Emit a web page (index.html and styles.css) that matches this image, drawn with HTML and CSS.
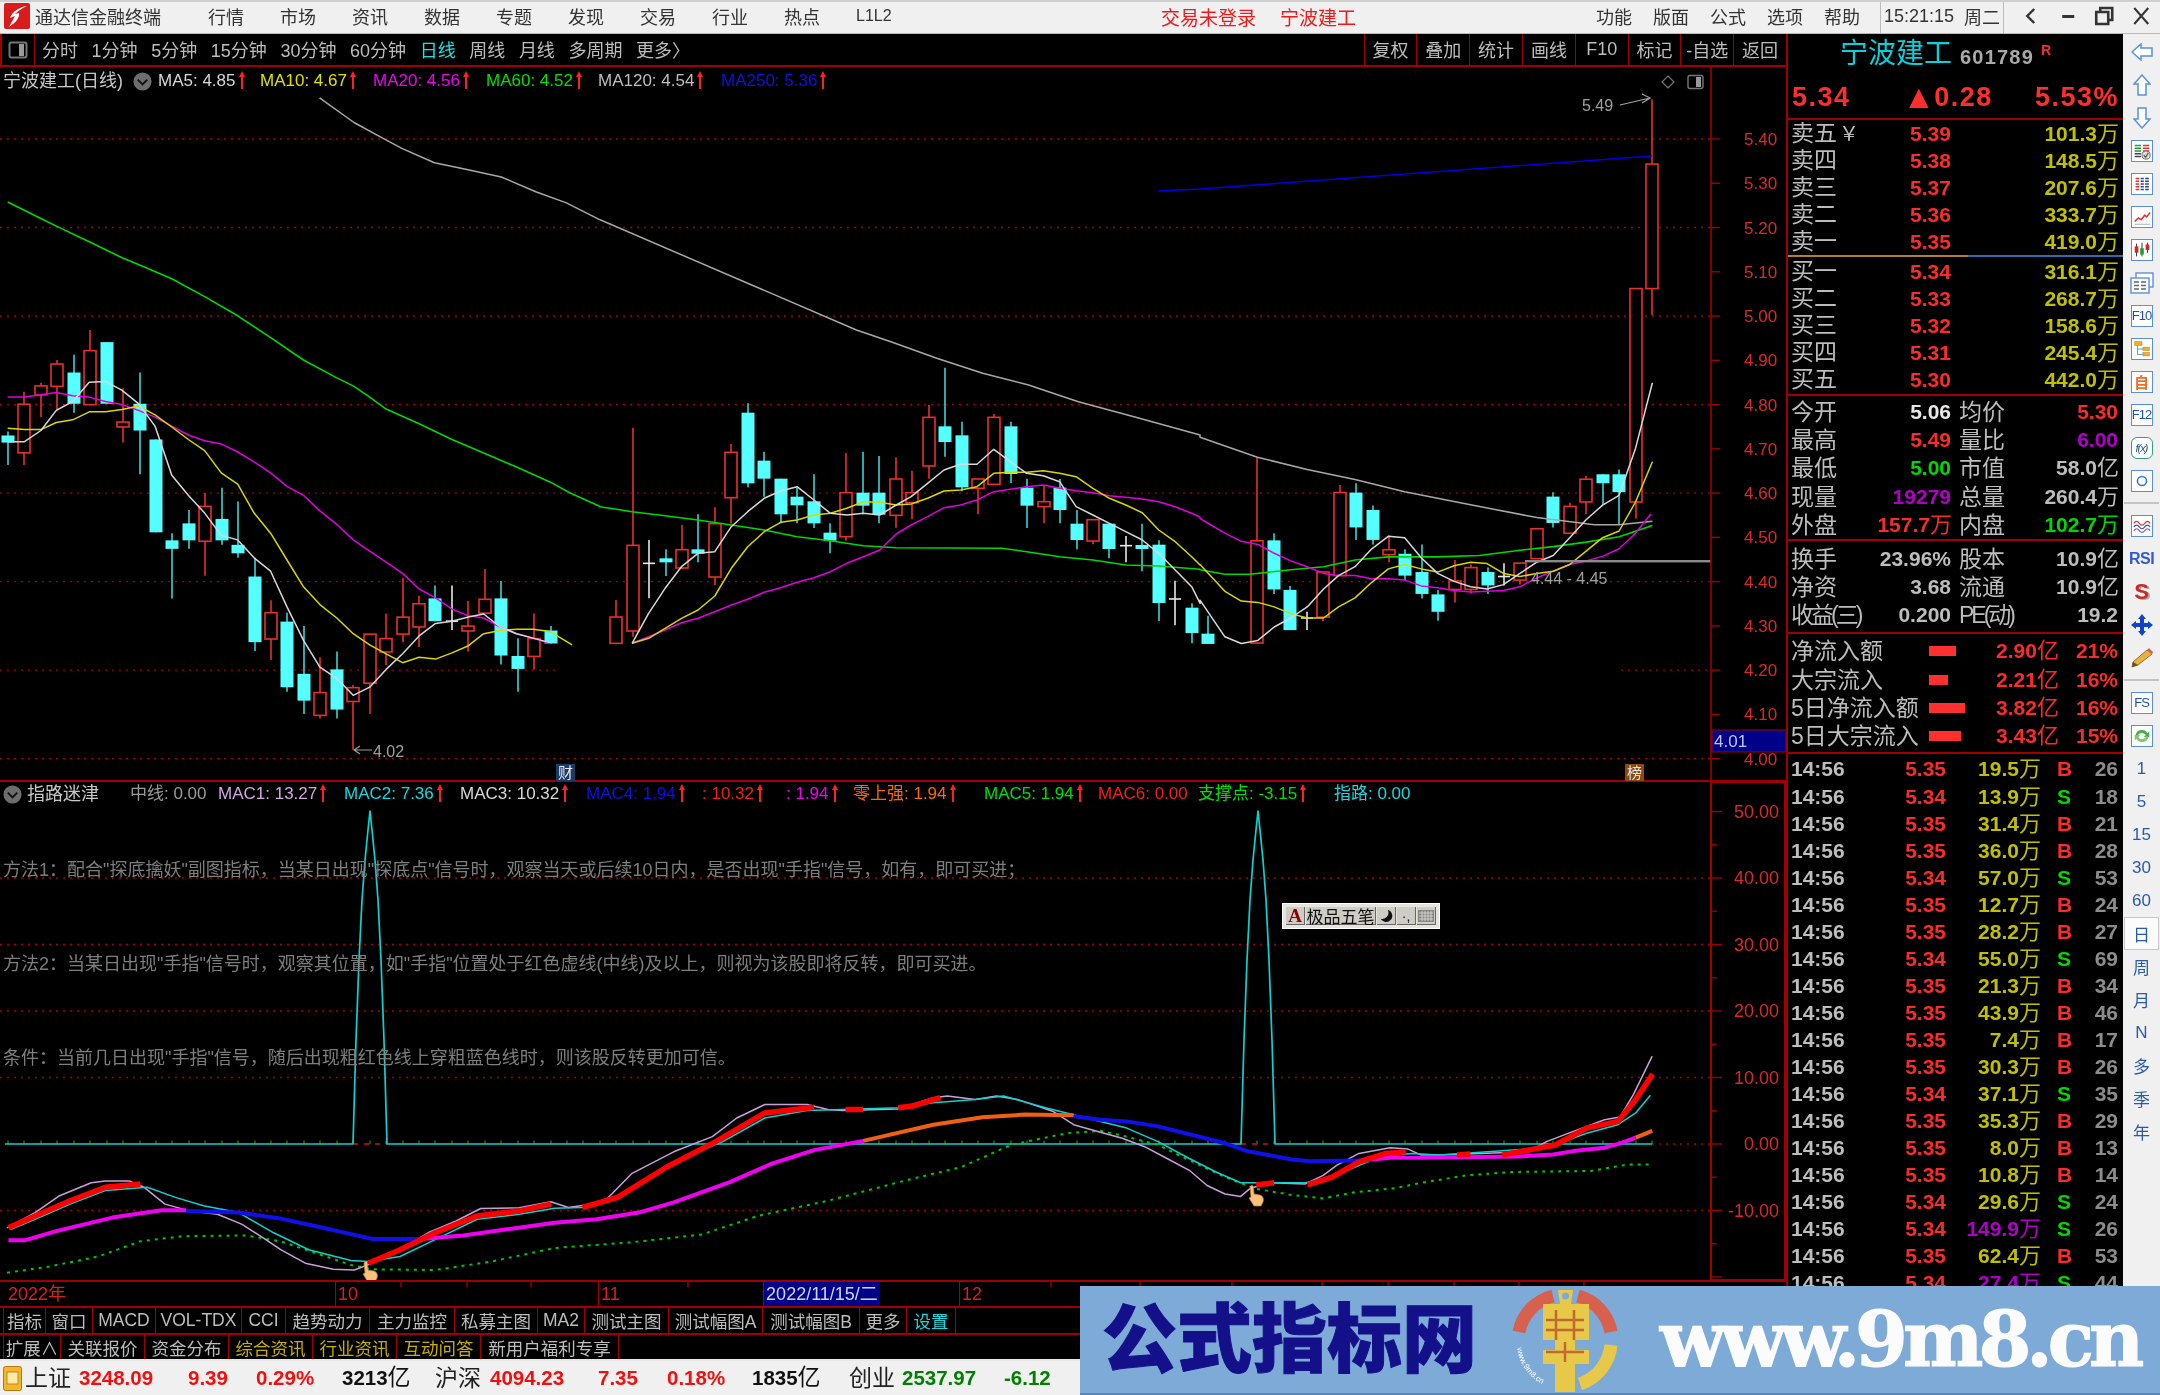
FILE: index.html
```html
<!DOCTYPE html>
<html lang="zh-CN">
<head>
<meta charset="utf-8">
<title>通达信金融终端</title>
<link rel="stylesheet" href="styles.css">
</head>
<body>
<div class="app">
  <header class="titlebar">
    <svg class="logo" viewBox="0 0 26 26"><rect width="26" height="26" rx="2" fill="#d81c1c"/><path d="M23 3 C15 4 8 9 6 15 L11 13 L5 24 C11 20 16 15 15 10 L11 11 C14 8 18 5 23 3Z" fill="#fff"/></svg>
    <span class="app-name">通达信金融终端</span>
    <nav class="menu menu-main"><span>行情</span><span>市场</span><span>资讯</span><span>数据</span><span>专题</span><span>发现</span><span>交易</span><span>行业</span><span>热点</span><span class="l1l2">L1L2</span></nav>
    <span class="login">交易未登录</span>
    <span class="login login-stock">宁波建工</span>
    <nav class="menu menu-side"><span>功能</span><span>版面</span><span>公式</span><span>选项</span><span>帮助</span></nav>
    <div class="clock"><span>15:21:15</span><span class="week">周二</span></div>
    <div class="win">
      <svg viewBox="0 0 36 24"><path d="M21 5 L14 12 L21 19" fill="none" stroke="#333" stroke-width="2.4"/></svg>
      <svg viewBox="0 0 36 24"><path d="M12 12.5 H24" stroke="#333" stroke-width="3"/></svg>
      <svg viewBox="0 0 36 24"><path d="M14 8 V4 H26 V16 H22 M10 8 H22 V20 H10Z" fill="none" stroke="#333" stroke-width="2.6"/></svg>
      <svg viewBox="0 0 36 24"><path d="M11 4 L25 20 M25 4 L11 20" stroke="#333" stroke-width="2"/></svg>
    </div>
  </header>

  <div class="workspace">
    <main class="charts">
      <div class="period-bar">
        <div class="period-toggle"><svg viewBox="0 0 20 18"><rect x="1.5" y="1.5" width="17" height="15" rx="2" fill="none" stroke="#777" stroke-width="2"/><rect x="11" y="3" width="5" height="12" fill="#999"/></svg></div>
        <div class="periods"><span>分时</span><span>1分钟</span><span>5分钟</span><span>15分钟</span><span>30分钟</span><span>60分钟</span><span class="on">日线</span><span>周线</span><span>月线</span><span>多周期</span><span>更多〉</span></div>
        <div class="actions"><span>复权</span><span>叠加</span><span>统计</span><span>画线</span><span>F10</span><span>标记</span><span>-自选</span><span>返回</span></div>
      </div>

      <section class="pane price-pane">
        <svg id="price" class="plot" viewBox="0 67 1786 714" width="1786" height="714"></svg>
        <div class="legend price-legend">
          <span class="pane-name">宁波建工(日线)</span>
          <svg class="chev" viewBox="0 0 20 20"><circle cx="10" cy="10" r="9.5" fill="#6e6e6e"/><path d="M5 8 L10 13 L15 8" fill="none" stroke="#111" stroke-width="2"/></svg>
          <span class="c-white">MA5: 4.85<i class="up"></i></span>
          <span class="c-yellow">MA10: 4.67<i class="up"></i></span>
          <span class="c-magenta">MA20: 4.56<i class="up"></i></span>
          <span class="c-green">MA60: 4.52<i class="up"></i></span>
          <span class="c-gray">MA120: 4.54<i class="up"></i></span>
          <span class="c-blue">MA250: 5.36<i class="up"></i></span>
        </div>
        <span class="badge badge-cai">财</span>
        <span class="badge badge-bang">榜</span>
      </section>

      <section class="pane sub-pane">
        <svg id="sub" class="plot" viewBox="0 782 1786 498" width="1786" height="498"></svg>
        <div class="legend sub-legend">
          <svg class="chev" viewBox="0 0 20 20"><circle cx="10" cy="10" r="9.5" fill="#6e6e6e"/><path d="M5 8 L10 13 L15 8" fill="none" stroke="#111" stroke-width="2"/></svg>
          <span class="pane-name">指路迷津</span>
          <span class="c-mid">中线: 0.00</span>
          <span class="c-lilac">MAC1: 13.27<i class="up"></i></span>
          <span class="c-cyan">MAC2: 7.36<i class="up"></i></span>
          <span class="c-white">MAC3: 10.32<i class="up"></i></span>
          <span class="c-blue">MAC4: 1.94<i class="up"></i></span>
          <span class="c-red">: 10.32<i class="up"></i></span>
          <span class="c-magenta">: 1.94<i class="up"></i></span>
          <span class="c-orange">零上强: 1.94<i class="up"></i></span>
          <span class="c-green">MAC5: 1.94<i class="up"></i></span>
          <span class="c-red">MAC6: 0.00</span>
          <span class="c-green">支撑点: -3.15<i class="up"></i></span>
          <span class="c-cyan">指路: 0.00</span>
        </div>
        <p class="note note-1">方法1：配合"探底擒妖"副图指标，当某日出现"探底点"信号时，观察当天或后续10日内，是否出现"手指"信号，如有，即可买进；</p>
        <p class="note note-2">方法2：当某日出现"手指"信号时，观察其位置，如"手指"位置处于红色虚线(中线)及以上，则视为该股即将反转，即可买进。</p>
        <p class="note note-3">条件：当前几日出现"手指"信号，随后出现粗红色线上穿粗蓝色线时，则该股反转更加可信。</p>
        <div class="ime">
          <span class="ime-a">A</span><span class="ime-name">极品五笔</span>
          <span class="ime-btn"><svg viewBox="0 0 16 16" width="14" height="14"><path d="M10 1 A7 7 0 1 1 2 11 A7 7 0 0 0 10 1Z" fill="#111"/></svg></span>
          <span class="ime-btn ime-punct">·,</span>
          <span class="ime-btn"><svg viewBox="0 0 16 12" width="16" height="12"><rect width="16" height="12" fill="#888"/><path d="M1 3H15M1 6H15M1 9H15M4 1V11M7 1V11M10 1V11M13 1V11" stroke="#ddd" stroke-width=".8"/></svg></span>
        </div>
      </section>

      <div class="date-row">
        <span class="date">2022年</span><span class="date">10</span><span class="date">11</span><span class="date date-on">2022/11/15/二</span><span class="date">12</span>
        <svg class="date-ticks" viewBox="0 0 1786 6" width="1786" height="6"><path d="M401 0v5M467 0v5M531 0v5M688 0v5M1051 0v5M1140 0v5M1232 0v5M1322 0v5M1388 0v5M1454 0v5M1519 0v5M1584 0v5" stroke="#a00000" stroke-width="1.4"/></svg>
      </div>
      <div class="tabs tabs-a"><span>指标</span><span>窗口</span><span>MACD</span><span>VOL-TDX</span><span>CCI</span><span>趋势动力</span><span>主力监控</span><span>私募主图</span><span>MA2</span><span>测试主图</span><span>测试幅图A</span><span>测试幅图B</span><span>更多</span><span class="c-cyan">设置</span></div>
      <div class="tabs tabs-b"><span>扩展∧</span><span>关联报价</span><span>资金分布</span><span class="c-gold">综合资讯</span><span class="c-gold">行业资讯</span><span class="c-gold">互动问答</span><span>新用户福利专享</span></div>
    </main>

    <aside class="quote">
      <div class="stock-head">
        <div class="stock-name"><span class="name">宁波建工</span><span class="code">601789</span><sup class="flag">R</sup></div>
        <div class="stock-price"><b>5.34</b><b class="tri-cell"><i class="tri">▲</i>0.28</b><b>5.53%</b></div>
      </div>
      <div class="book book-sell">
        <div class="book-row"><span>卖五<i class="yen">￥</i></span><b class="red">5.39</b><b class="yel">101.3<i class="u">万</i></b></div>
        <div class="book-row"><span>卖四</span><b class="red">5.38</b><b class="yel">148.5<i class="u">万</i></b></div>
        <div class="book-row"><span>卖三</span><b class="red">5.37</b><b class="yel">207.6<i class="u">万</i></b></div>
        <div class="book-row"><span>卖二</span><b class="red">5.36</b><b class="yel">333.7<i class="u">万</i></b></div>
        <div class="book-row"><span>卖一</span><b class="red">5.35</b><b class="yel">419.0<i class="u">万</i></b></div>
      </div>
      <div class="book-split"></div>
      <div class="book book-buy">
        <div class="book-row"><span>买一</span><b class="red">5.34</b><b class="yel">316.1<i class="u">万</i></b></div>
        <div class="book-row"><span>买二</span><b class="red">5.33</b><b class="yel">268.7<i class="u">万</i></b></div>
        <div class="book-row"><span>买三</span><b class="red">5.32</b><b class="yel">158.6<i class="u">万</i></b></div>
        <div class="book-row"><span>买四</span><b class="red">5.31</b><b class="yel">245.4<i class="u">万</i></b></div>
        <div class="book-row"><span>买五</span><b class="red">5.30</b><b class="yel">442.0<i class="u">万</i></b></div>
      </div>
      <div class="stats stats-a">
        <div class="stat"><span>今开</span><b class="wht">5.06</b><span>均价</span><b class="red">5.30</b></div>
        <div class="stat"><span>最高</span><b class="red">5.49</b><span>量比</span><b class="pur">6.00</b></div>
        <div class="stat"><span>最低</span><b class="grn">5.00</b><span>市值</span><b>58.0<i class="u">亿</i></b></div>
        <div class="stat"><span>现量</span><b class="pur">19279</b><span>总量</span><b>260.4<i class="u">万</i></b></div>
        <div class="stat"><span>外盘</span><b class="red">157.7<i class="u">万</i></b><span>内盘</span><b class="grn">102.7<i class="u">万</i></b></div>
      </div>
      <div class="stats stats-b">
        <div class="stat"><span>换手</span><b>23.96%</b><span>股本</span><b>10.9<i class="u">亿</i></b></div>
        <div class="stat"><span>净资</span><b>3.68</b><span>流通</span><b>10.9<i class="u">亿</i></b></div>
        <div class="stat"><span class="tight">收益(三)</span><b>0.200</b><span class="tight">PE(动)</span><b>19.2</b></div>
      </div>
      <div class="flows">
        <div class="flow"><span>净流入额</span><i class="bar" style="width:27px"></i><b>2.90<i class="u">亿</i></b><b>21%</b></div>
        <div class="flow"><span>大宗流入</span><i class="bar" style="width:19px"></i><b>2.21<i class="u">亿</i></b><b>16%</b></div>
        <div class="flow"><span>5日净流入额</span><i class="bar" style="width:36px"></i><b>3.82<i class="u">亿</i></b><b>16%</b></div>
        <div class="flow"><span>5日大宗流入</span><i class="bar" style="width:32px"></i><b>3.43<i class="u">亿</i></b><b>15%</b></div>
      </div>
      <div class="ticks">
        <div class="tick"><b>14:56</b><b class="red">5.35</b><b class="yel">19.5<i class="u">万</i></b><b class="red bs">B</b><b class="cnt">26</b></div>
        <div class="tick"><b>14:56</b><b class="red">5.34</b><b class="yel">13.9<i class="u">万</i></b><b class="grn bs">S</b><b class="cnt">18</b></div>
        <div class="tick"><b>14:56</b><b class="red">5.35</b><b class="yel">31.4<i class="u">万</i></b><b class="red bs">B</b><b class="cnt">21</b></div>
        <div class="tick"><b>14:56</b><b class="red">5.35</b><b class="yel">36.0<i class="u">万</i></b><b class="red bs">B</b><b class="cnt">28</b></div>
        <div class="tick"><b>14:56</b><b class="red">5.34</b><b class="yel">57.0<i class="u">万</i></b><b class="grn bs">S</b><b class="cnt">53</b></div>
        <div class="tick"><b>14:56</b><b class="red">5.35</b><b class="yel">12.7<i class="u">万</i></b><b class="red bs">B</b><b class="cnt">24</b></div>
        <div class="tick"><b>14:56</b><b class="red">5.35</b><b class="yel">28.2<i class="u">万</i></b><b class="red bs">B</b><b class="cnt">27</b></div>
        <div class="tick"><b>14:56</b><b class="red">5.34</b><b class="yel">55.0<i class="u">万</i></b><b class="grn bs">S</b><b class="cnt">69</b></div>
        <div class="tick"><b>14:56</b><b class="red">5.35</b><b class="yel">21.3<i class="u">万</i></b><b class="red bs">B</b><b class="cnt">34</b></div>
        <div class="tick"><b>14:56</b><b class="red">5.35</b><b class="yel">43.9<i class="u">万</i></b><b class="red bs">B</b><b class="cnt">46</b></div>
        <div class="tick"><b>14:56</b><b class="red">5.35</b><b class="yel">7.4<i class="u">万</i></b><b class="red bs">B</b><b class="cnt">17</b></div>
        <div class="tick"><b>14:56</b><b class="red">5.35</b><b class="yel">30.3<i class="u">万</i></b><b class="red bs">B</b><b class="cnt">26</b></div>
        <div class="tick"><b>14:56</b><b class="red">5.34</b><b class="yel">37.1<i class="u">万</i></b><b class="grn bs">S</b><b class="cnt">35</b></div>
        <div class="tick"><b>14:56</b><b class="red">5.35</b><b class="yel">35.3<i class="u">万</i></b><b class="red bs">B</b><b class="cnt">29</b></div>
        <div class="tick"><b>14:56</b><b class="red">5.35</b><b class="yel">8.0<i class="u">万</i></b><b class="red bs">B</b><b class="cnt">13</b></div>
        <div class="tick"><b>14:56</b><b class="red">5.35</b><b class="yel">10.8<i class="u">万</i></b><b class="red bs">B</b><b class="cnt">14</b></div>
        <div class="tick"><b>14:56</b><b class="red">5.34</b><b class="yel">29.6<i class="u">万</i></b><b class="grn bs">S</b><b class="cnt">24</b></div>
        <div class="tick"><b>14:56</b><b class="red">5.34</b><b class="pur">149.9<i class="u">万</i></b><b class="grn bs">S</b><b class="cnt">26</b></div>
        <div class="tick"><b>14:56</b><b class="red">5.35</b><b class="yel">62.4<i class="u">万</i></b><b class="red bs">B</b><b class="cnt">53</b></div>
        <div class="tick"><b>14:56</b><b class="red">5.34</b><b class="pur">27.4<i class="u">万</i></b><b class="grn bs">S</b><b class="cnt">44</b></div>
      </div>
    </aside>

    <nav class="tools">
      <div class="tool"><svg viewBox="0 0 22 18" width="22" height="18"><path d="M1 9 L10 1 V5 H21 V13 H10 V17Z" fill="#fff" stroke="#5a8fe0" stroke-width="1.5"/></svg></div>
      <div class="tool"><svg viewBox="0 0 18 22" width="18" height="22"><path d="M9 1 L17 10 H13 V21 H5 V10 H1Z" fill="#fff" stroke="#5a8fe0" stroke-width="1.5"/></svg></div>
      <div class="tool"><svg viewBox="0 0 18 22" width="18" height="22"><path d="M9 21 L17 12 H13 V1 H5 V12 H1Z" fill="#fff" stroke="#5a8fe0" stroke-width="1.5"/></svg></div>
      <div class="tool"><svg class="frame" viewBox="0 0 22 22"><path d="M3 5H10M3 8H10M3 11H10" stroke="#1a9c3a" stroke-width="1.5"/><path d="M12 5H19M12 8H19M12 11H19" stroke="#e03030" stroke-width="1.5"/><path d="M3 14H10M3 17H10" stroke="#444" stroke-width="1.5"/><circle cx="15.5" cy="15.5" r="4.5" fill="#ddd" stroke="#666"/><path d="M13 15.5 L15 18 L18 13" fill="none" stroke="#444" stroke-width="1.2"/></svg></div>
      <div class="tool"><svg class="frame" viewBox="0 0 22 22"><path d="M4 5H8M4 8H8M4 11H8M4 14H8M4 17H8" stroke="#e03030" stroke-width="1.6"/><path d="M9.5 5H13M9.5 8H13M9.5 11H13M9.5 14H13M9.5 17H13" stroke="#2040c0" stroke-width="1.6"/><path d="M14.5 5H18.5M14.5 8H18.5M14.5 11H18.5M14.5 14H18.5M14.5 17H18.5" stroke="#1a40a0" stroke-width="1.6"/></svg></div>
      <div class="tool"><svg class="frame" viewBox="0 0 22 22"><path d="M3 16 L7 12 L10 14 L14 9 L16 11 L20 6" fill="none" stroke="#e03030" stroke-width="1.6"/><path d="M3 19H20" stroke="#9ab"/></svg></div>
      <div class="tool"><svg class="frame" viewBox="0 0 22 22"><path d="M5 4V18M11 3V18M17 3V14" stroke="#222"/><rect x="3" y="7" width="4" height="7" fill="#e02020"/><rect x="9" y="9" width="4" height="7" fill="#18a030"/><rect x="15" y="5" width="4" height="6" fill="#e02020"/></svg></div>
      <div class="tool"><svg viewBox="0 0 24 22" width="24" height="22"><rect x="6" y="1" width="17" height="14" fill="#fff" stroke="#5a8fe0" stroke-width="1.4"/><rect x="1" y="6" width="18" height="15" fill="#fff" stroke="#5a8fe0" stroke-width="1.4"/><path d="M4 10H9M11 10H16M4 13.5H9M11 13.5H16M4 17H9M11 17H16" stroke="#666" stroke-width="1.6"/></svg></div>
      <div class="tool"><span class="key">F10</span></div>
      <div class="tool"><svg class="frame" viewBox="0 0 22 22"><rect x="3" y="3" width="8" height="4" fill="#f0b020" stroke="#c08010" stroke-width=".6"/><rect x="12" y="9" width="7" height="3.6" fill="#f0b020" stroke="#c08010" stroke-width=".6"/><rect x="12" y="15" width="7" height="3.6" fill="#f0b020" stroke="#c08010" stroke-width=".6"/><path d="M6 7V17H12M6 11H12" fill="none" stroke="#5a8fe0"/></svg></div>
      <div class="tool"><span class="key key-zi">自</span></div>
      <div class="tool"><span class="key">F12</span></div>
      <div class="tool"><span class="key key-fx">f(x)</span></div>
      <div class="tool"><svg class="frame" viewBox="0 0 22 22"><circle cx="11" cy="11" r="5" fill="none" stroke="#3a78d8" stroke-width="1.8"/></svg></div>
      <div class="tool-sep"></div>
      <div class="tool"><svg class="frame" viewBox="0 0 22 22"><path d="M2 8 Q5 4 8 8 T14 8 T20 8" fill="none" stroke="#e03030" stroke-width="1.3"/><path d="M2 12 Q5 8 8 12 T14 12 T20 12" fill="none" stroke="#3050d0" stroke-width="1.3"/><path d="M2 16 Q5 12 8 16 T14 16 T20 16" fill="none" stroke="#8060c0" stroke-width="1.3"/></svg></div>
      <div class="tool"><span class="rsi">RSI</span></div>
      <div class="tool"><span class="s-mark">S</span></div>
      <div class="tool"><svg viewBox="0 0 24 24" width="24" height="24"><path d="M12 1 L16 6 H14 V10 H18 V8 L23 12 L18 16 V14 H14 V18 H16 L12 23 L8 18 H10 V14 H6 V16 L1 12 L6 8 V10 H10 V6 H8Z" fill="#1044c8"/></svg></div>
      <div class="tool"><svg viewBox="0 0 24 22" width="24" height="22"><path d="M2 20 L3 15 L17 3 L22 7 L8 18Z" fill="#e8b040" stroke="#a07030"/><path d="M17 3 L19 1 L23 5 L22 7Z" fill="#e06060"/><path d="M2 20 L3 15 L8 18Z" fill="#553"/></svg></div>
      <div class="tool-sep"></div>
      <div class="tool"><span class="key">FS</span></div>
      <div class="tool"><svg class="frame" viewBox="0 0 22 22"><path d="M4 10 A7 7 0 0 1 17 8 L19 6 V12 H13 L15 10 A5 5 0 0 0 6 11Z" fill="#48b048"/><path d="M18 12 A7 7 0 0 1 5 14 L3 16 V10 H9 L7 12 A5 5 0 0 0 16 11Z" fill="#80c870"/></svg></div>
      <div class="tool tool-t">1</div><div class="tool tool-t">5</div><div class="tool tool-t">15</div><div class="tool tool-t">30</div><div class="tool tool-t">60</div>
      <div class="tool tool-t tool-on">日</div><div class="tool tool-t">周</div><div class="tool tool-t">月</div><div class="tool tool-t">N</div><div class="tool tool-t">多</div><div class="tool tool-t">季</div><div class="tool tool-t">年</div>
    </nav>
  </div>

  <footer class="status">
    <svg class="status-ic" viewBox="0 0 19 25"><rect x=".5" y=".5" width="18" height="24" rx="2" fill="#f2b52c" stroke="#b07a10"/><rect x="4" y="6" width="11" height="12" fill="#fde9a8" stroke="#c08a18"/></svg>
    <span class="idx">上证</span><b class="up-n">3248.09</b><b class="up-n">9.39</b><b class="up-n">0.29%</b><b>3213<i class="idx-u">亿</i></b>
    <span class="idx">沪深</span><b class="up-n">4094.23</b><b class="up-n">7.35</b><b class="up-n">0.18%</b><b>1835<i class="idx-u">亿</i></b>
    <span class="idx">创业</span><b class="dn-n">2537.97</b><b class="dn-n">-6.12</b>
  </footer>

  <aside class="watermark">
    <span class="wm-cn">公式指标网</span>
    <svg class="wm-logo" viewBox="1510 1286 112 108" width="112" height="108">
      <g fill="none" stroke-width="13">
        <path d="M1519 1332 A46 46 0 0 1 1553 1296" stroke="#d8604e"/>
        <path d="M1578 1296 A46 46 0 0 1 1611 1332" stroke="#d8604e"/>
        <path d="M1611 1345 A46 46 0 0 1 1580 1384" stroke="#e8c848"/>
      </g>
      <path d="M1558 1290 h15 l-2 14 h18 v36 h-14 v10 h14 v14 h-14 v28 h-20 v-28 h-12 v-14 h12 v-10 h-12 v-36 h17Z" fill="#e8c848"/>
      <circle cx="1565.5" cy="1296" r="3.5" fill="#7eaad8"/>
      <path d="M1546 1320 h38 M1546 1330 h38 M1556 1310 v30 M1574 1310 v30 M1546 1352 h38 M1565 1342 v20" stroke="#c06a30" stroke-width="2.5" fill="none"/>
      <path id="wmArc" d="M1517 1348 A48 48 0 0 0 1552 1388" fill="none"/>
      <text class="wm-arc"><textPath href="#wmArc">www.9m8.cn</textPath></text>
    </svg>
    <span class="wm-url">www.9m8.cn</span>
  </aside>
</div>
<script src="chart.js"></script>
</body>
</html>
```

FILE: styles.css
```css
* { box-sizing: border-box; }
html, body { margin: 0; padding: 0; background: #000; }
body { font-family: "Liberation Sans", "Noto Sans CJK SC", sans-serif; }
i { font-style: normal; }
p { margin: 0; }
.app { position: relative; width: 2160px; height: 1395px; overflow: hidden; display: flex; flex-direction: column; background: #000; filter: blur(.45px); }

.titlebar { flex: 0 0 34px; display: flex; align-items: center; padding: 0 0 3px 4px; background: #f0f0f0; border-top: 2px solid #cfcfcf; border-bottom: 1px solid #b8b8b8; color: #333; font-size: 18px; white-space: nowrap; }
.logo { width: 26px; height: 26px; }
.app-name { margin-left: 5px; width: 126px; }
.menu { display: flex; }
.menu-main { margin-left: 47px; gap: 36px; width: 684px; }
.l1l2 { font-size: 16px; align-self: center; }
.login { color: #f01818; font-size: 19px; margin-left: 269px; width: 97px; }
.login-stock { margin-left: 22px; width: 76px; }
.menu-side { margin-left: 240px; gap: 21px; }
.clock { margin: 0 0 -3px 20px; align-self: stretch; width: 124px; display: flex; align-items: center; padding: 0 0 3px 3px; border-left: 1px solid #bbb; border-right: 1px solid #bbb; }
.week { margin-left: 10px; }
.win { display: flex; margin-left: 9px; }
.win svg { width: 36.5px; height: 24px; }

.workspace { flex: 1 1 auto; display: flex; min-height: 0; }
.charts { width: 1788px; flex: none; display: flex; flex-direction: column; border-right: 2px solid #a00000; }
.period-bar { flex: 0 0 33px; display: flex; align-items: stretch; border-bottom: 2px solid #a00000; color: #bdbdbd; font-size: 18px; white-space: nowrap; }
.period-toggle { width: 35px; display: flex; align-items: center; justify-content: center; border-right: 1px solid #a00000; border-left: 2px solid #a00000; }
.period-toggle svg { width: 20px; height: 18px; }
.periods { display: flex; align-items: center; gap: 13.6px; margin-left: 7px; padding-bottom: 2px; }
.on { color: #22e0e0; }
.actions { display: flex; margin-left: auto; }
.actions span { width: 52.8px; display: flex; align-items: center; justify-content: center; padding-bottom: 1px; border-left: 1px solid #a00000; }

.pane { position: relative; border-bottom: 2px solid #a00000; }
.price-pane { flex: 0 0 715px; }
.sub-pane { flex: 0 0 500px; }
.plot { position: absolute; left: 0; top: 0; display: block; }
.legend { position: relative; display: grid; grid-template-rows: 100%; align-items: center; font-size: 17px; line-height: 20px; white-space: nowrap; }
.price-legend { height: 28px; grid-template-columns: 130px 25px 102px 113px 113px 112px 123px auto; padding-left: 3px; }
.sub-legend { height: 24px; grid-template-columns: 24px 103px 88px 126px 116px 126px 116px 84px 67px 131px 114px 100px 136px auto; padding-left: 3px; }
.pane-name { color: #c8c8c8; font-size: 18px; }
.chev { width: 19px; height: 19px; }
.up { position: relative; display: inline-block; width: 2px; height: 15px; margin-left: 5px; vertical-align: -3px; background: #ff2020; }
.up::before { content: ""; position: absolute; left: -2px; top: -3px; border: solid transparent; border-width: 0 3px 6px; border-bottom-color: #ff2020; }
.c-white { color: #d8d8d8; }
.c-yellow { color: #e0e000; }
.c-magenta { color: #f000f0; }
.c-green { color: #00e000; }
.c-gray { color: #bdbdbd; }
.c-blue { color: #1010e8; }
.c-mid { color: #9a9a9a; }
.c-lilac { color: #d0a8e0; }
.c-cyan { color: #18d8e0; }
.c-red { color: #f02020; }
.c-orange { color: #ff6a00; }
.c-gold { color: #c8b000; }
.badge { position: absolute; top: 697px; width: 19px; height: 17px; font-size: 15px; line-height: 17px; text-align: center; color: #e8e8e8; }
.badge-cai { left: 556px; background: #1b3a66; }
.badge-bang { left: 1625px; background: #8a4a10; }
.note { position: absolute; left: 3px; color: #7e7e7e; font-size: 18px; line-height: 24px; white-space: nowrap; }
.note-1 { top: 76px; }
.note-2 { top: 170px; }
.note-3 { top: 264px; }
.ime { position: absolute; left: 1282px; top: 121px; width: 158px; height: 26px; display: flex; gap: 1px; padding: 3px; background: #e6e4de; border: 1px solid #fff; color: #111; font-size: 17px; }
.ime span { display: flex; align-items: center; justify-content: center; background: #cfccc6; border-right: 1px solid #666; border-bottom: 1px solid #666; }
.ime-a { width: 19px; color: #8a0000; font: bold 19px "Liberation Serif", serif; }
.ime-name { width: 70px; }
.ime-btn { width: 19px; }
.ime-punct { font-size: 14px; }

.date-row { position: relative; flex: 0 0 24px; display: grid; grid-template-columns: 335px 263px 165px 196px 1fr; border-bottom: 2px solid #a00000; color: #d82020; font-size: 18px; white-space: nowrap; }
.date { padding-left: 2px; border-left: 1px solid #a00000; line-height: 24px; }
.date:first-child { padding-left: 8px; border-left: 0; }
.date-on { width: 117px; padding: 0; background: #000088; color: #d4d4e8; text-align: center; }
.date-ticks { position: absolute; left: 0; top: 0; }
.tabs { display: grid; padding-left: 3px; border-bottom: 2px solid #a00000; color: #bdbdbd; font-size: 17.5px; white-space: nowrap; }
.tabs span { display: flex; align-items: center; justify-content: center; border-right: 1px solid #a00000; }
.tabs span:first-child { border-left: 1px solid #a00000; }
.tabs-a { flex: 0 0 26px; grid-template-columns: 43px 47px 63px 86px 44px 84px 85px 83px 47px 84px 94px 97px 47px 49px; }
.tabs-b { flex: 0 0 27px; grid-template-columns: 58px 84px 84px 84px 84px 84px 138px; }
.tabs span.c-cyan { color: #18d8e0; }
.tabs span.c-gold { color: #c8b000; }

.quote { width: 335px; flex: none; display: flex; flex-direction: column; overflow: hidden; color: #bdbdbd; font-size: 23px; white-space: nowrap; }
.quote b { font-size: 21px; font-weight: bold; }
.u { font-weight: normal; font-size: 22px; line-height: 0; letter-spacing: -1px; }
.red { color: #f82c2c; }
.yel { color: #c0c000; }
.grn { color: #00d800; }
.pur { color: #b000c8; }
.wht { color: #e8e8e8; }
.stock-head { flex: 0 0 86px; border-bottom: 2px solid #a00000; }
.stock-name { height: 39px; display: flex; align-items: center; padding-left: 52px; }
.name { color: #08d0dc; font-size: 28px; line-height: 30px; }
.code { margin-left: 8px; margin-top: 7px; color: #aaa; font-size: 20px; font-weight: bold; letter-spacing: 1.2px; }
.flag { margin-left: 7px; margin-top: -8px; color: #ee3030; font-size: 14px; font-weight: bold; line-height: 1; }
.stock-price { display: flex; padding: 4px 5px 0 4px; }
.quote .stock-price b { font-size: 27px; letter-spacing: 1.5px; color: #ff2e2e; line-height: 40px; }
.quote .stock-price .tri-cell { margin-left: 52px; }
.quote .stock-price b:last-child { margin-left: auto; margin-right: -1px; }
.tri { font-size: 33px; letter-spacing: -1px; line-height: 0; vertical-align: -2px; }
.book { display: flex; flex-direction: column; padding-left: 3px; padding-right: 5px; }
.book-row { height: 27px; display: grid; grid-template-columns: 119px 1fr auto; grid-template-rows: 100%; align-items: center; line-height: 27px; }
.yen { margin-left: 2px; font-size: 20px; }
.book-split { flex: 0 0 2px; background: linear-gradient(to right, #b0802c 0 180px, #2f6cac 180px); }
.book-sell { flex: 0 0 135px; }
.book-buy { flex: 0 0 139px; border-bottom: 2px solid #a00000; padding-top: 1px; }
.stats { display: flex; flex-direction: column; padding: 0 5px 0 3px; border-bottom: 2px solid #a00000; }
.stat { flex: none; display: grid; grid-template-columns: 60px 100px 66px 1fr; grid-template-rows: 100%; align-items: center; line-height: 26px; }
.stat span:nth-of-type(2) { padding-left: 8px; }
.stat b { text-align: right; }
.tight { letter-spacing: -3px; }
.stats-a { flex: 0 0 145px; padding-top: 1.5px; }
.stats-a .stat { height: 28.4px; }
.stats-b { flex: 0 0 93px; padding-top: 3.5px; }
.stats-b .stat { height: 28px; }
.flows { flex: 0 0 120px; padding: 2.5px 5px 0 3px; border-bottom: 2px solid #a00000; }
.flow { height: 28.4px; display: grid; grid-template-columns: 138px 40px 89px 60px; grid-template-rows: 100%; align-items: center; line-height: 26px; }
.flow b { color: #f82c2c; text-align: right; }
.bar { display: block; height: 10px; background: #ff3030; }
.ticks { padding: 1.5px 5px 0 3px; }
.tick { height: 27.05px; display: grid; grid-template-columns: 60px 95px 94px 40px 38px; grid-template-rows: 100%; align-items: center; line-height: 26px; }
.tick b { text-align: right; }
.tick b:first-child { text-align: left; }
.tick .bs { text-align: left; padding-left: 17px; }
.tick .cnt { color: #8c8c8c; }

.tools { width: 37px; flex: none; display: flex; flex-direction: column; background: #f0f0f0; color: #2a5aa8; font-size: 17px; }
.tool { flex: 0 0 33px; display: flex; align-items: center; justify-content: center; }
.tool:first-child { margin-top: 1px; }
.frame, .key { width: 22px; height: 22px; background: #fff; border: 1.6px solid #5a8fe0; }
.key { display: flex; align-items: center; justify-content: center; color: #2050b0; font-size: 13px; letter-spacing: -1px; }
.key-zi { color: #f07028; font-size: 15px; font-weight: bold; letter-spacing: 0; }
.key-fx { border-radius: 6px; border-color: #3a9a90; color: #205a80; font-size: 11px; font-style: italic; }
.rsi { color: #3558d0; font-size: 16px; font-weight: bold; letter-spacing: -.5px; }
.s-mark { color: #d02828; font-size: 22px; font-weight: bold; text-shadow: 2px 1px 0 #aaa; }
.tool-sep { flex: 0 0 12px; margin: 0 1px; display: flex; align-items: center; }
.tool-sep::after { content: ""; width: 100%; height: 2px; background: #c4c4c4; }
.tool-on { margin: 0 1px; background: #fbfbfb; border: 1px solid #c8c8c8; }

.status { flex: 0 0 36px; display: grid; grid-template-columns: 22px 54px 109px 68px 86px 93px 55px 108px 69px 85px 97px 53px 102px 1fr; grid-template-rows: 100%; align-items: center; padding-left: 3px; background: #f0f0f0; border-top: 2px solid #e8e8e8; color: #111; font-size: 20.5px; line-height: 26px; white-space: nowrap; }
.status b { font-weight: bold; }
.status-ic { width: 19px; height: 25px; }
.idx { font-size: 23px; color: #222; }
.idx-u { font-size: 23px; font-weight: normal; line-height: 0; }
.status .up-n { color: #f01010; }
.status .dn-n { color: #008000; }

.watermark { position: absolute; left: 1080px; top: 1286px; width: 1080px; height: 109px; display: flex; align-items: center; background: #7eaad8; border-bottom: 2px solid #5c88b8; overflow: hidden; white-space: nowrap; }
.wm-cn { margin-left: 22px; width: 412px; color: #14108a; font-size: 75px; font-weight: 900; line-height: 90px; -webkit-text-stroke: 1px #14108a; }
.wm-logo { flex: none; margin-left: -4px; }
.wm-arc { fill: #fff; font-size: 8px; }
.wm-url { margin-left: 38px; color: #fbfbfb; font: bold 76px "DejaVu Serif", serif; letter-spacing: -5px; -webkit-text-stroke: 1.2px #fbfbfb; }
```

FILE: chart.js
```js
// Draws the price and indicator panes. Source points are measured in three
// horizontal sections of the chart, each with its own scale.
var NS = 'http://www.w3.org/2000/svg';
var STEP = 16.44, X0 = 8;

function add(svg, tag, attrs, text) {
  var el = document.createElementNS(NS, tag);
  for (var k in attrs) el.setAttribute(k, attrs[k]);
  if (text !== undefined) el.textContent = text;
  svg.appendChild(el);
  return el;
}
function polyline(svg, points, stroke, width, extra) {
  var attrs = { points: points.map(function (p) { return p[0].toFixed(1) + ',' + p[1].toFixed(1); }).join(' '), fill: 'none', stroke: stroke, 'stroke-width': width, 'stroke-linejoin': 'round' };
  for (var k in extra) attrs[k] = extra[k];
  add(svg, 'polyline', attrs);
}
function map(flat, fx, fy) {
  var out = [];
  for (var i = 0; i < flat.length; i += 2) out.push([fx(flat[i]), fy(flat[i + 1])]);
  return out;
}
var ax = function (x) { return x / 2.613; }, ay = function (y) { return 60 + y / 2.24; };
var bx = function (x) { return 600 + x / 2.613; }, by = function (y) { return 330 + y / 3; };
var cx = function (x) { return 1200 + x / 2.613; };
var dx = function (x) { return x / 1.425; }, ex = function (x) { return 1100 + x / 2.24; };
var sy = function (y) { return 770 + y / 2.96; };
function section3(a, b, c) { return map(a, ax, ay).concat(map(b, bx, by), map(c, cx, ay)); }

/* ---------- price pane ---------- */
var price = document.getElementById('price');
var py = function (p) { return 139 + (5.4 - p) * 442.6; };
var DOT = { 'stroke-dasharray': '2 5' };

[5.4, 5.2, 5.0, 4.8, 4.6, 4.4, 4.0].forEach(function (p) {
  polyline(price, [[0, py(p)], [1711, py(p)]], '#a80000', 1.4, DOT);
});
polyline(price, [[0, py(4.2)], [558, py(4.2)]], '#a80000', 1.4, DOT);
polyline(price, [[1621, py(4.2)], [1711, py(4.2)]], '#a80000', 1.4, DOT);

// type, body top, body bottom, high, low
var candlesA = [['c',841,857,832,907],['r',771,880,743,907],['r',730,750,723,800],['r',681,731,672,785],['c',700,770,660,790],['r',651,772,605,772],['c',632,770,632,770],['r',811,822,735,857],['c',770,830,700,928],['c',850,1058,850,1058],['c',1076,1095,1060,1206],['c',1038,1076,1008,1095],['r',1000,1078,970,1155],['c',1028,1076,958,1086],['c',1086,1105,989,1115],['c',1157,1304,1115,1324],['r',1238,1297,1210,1344],['c',1258,1405,1238,1415],['c',1375,1435,1268,1465],['r',1417,1468,1338,1475],['c',1365,1455,1325,1475],['r',1406,1437,1400,1545],['r',1286,1396,1286,1465],['r',1296,1326,1240,1355],['r',1248,1286,1160,1305],['r',1218,1270,1200,1315],['c',1206,1257,1177,1257],['w',1257,1257,1177,1277],['r',1268,1279,1212,1325],['r',1208,1239,1140,1240],['c',1206,1334,1167,1354],['c',1335,1364,1295,1415],['r',1296,1336,1240,1365],['c',1278,1307,1268,1307]];
var candlesB = [['r',861,940,810,940],['r',646,903,293,920],['w',700,700,630,805],['c',685,697,658,738],['r',659,714,585,718],['c',658,671,553,697],['r',581,741,532,765],['r',367,503,342,581],['c',248,460,220,472],['c',392,446,365,500],['c',446,553,446,580],['c',500,526,473,580],['c',514,580,433,594],['c',608,632,580,670],['r',488,620,369,632],['c',488,527,365,553],['c',488,554,378,580],['r',447,556,382,593],['r',488,518,422,568],['r',262,408,225,446],['c',289,336,113,380],['c',316,472,275,484],['r',447,475,447,553],['r',262,463,252,463],['c',289,432,275,459],['c',473,527,446,594],['r',515,530,465,580],['c',473,540,447,580],['c',581,630,540,658],['r',569,633,569,643],['c',581,657,581,685],['w',647,647,618,697],['c',645,657,581,724],['c',644,819,631,873],['w',807,807,752,886],['c',833,909,820,940]];
var candlesC1 = [['c',1285,1308,1245,1308]];
var candlesC2 = [['r',1077,1306,890,1306],['c',1076,1186,1060,1196],['c',1187,1277,1178,1277],['w',1250,1250,1236,1277],['r',1147,1248,1147,1257],['r',969,1155,952,1155],['c',969,1047,948,1075],['c',1008,1075,998,1085],['r',1097,1108,1065,1125],['c',1106,1155,1096,1166],['c',1147,1196,1085,1206],['c',1197,1236,1187,1256],['r',1167,1186,1120,1215],['r',1137,1186,1130,1195],['c',1147,1177,1137,1196],['w',1157,1157,1127,1177],['r',1127,1165,1127,1175],['r',1050,1117,1050,1117],['c',978,1037,968,1047],['r',1000,1060,992,1060],['r',939,990,932,1017],['c',928,948,928,997],['c',928,968,917,1040],['r',512,990,512,1027],['r',233,512,88,572]];

function drawCandles(list, start, fy) {
  list.forEach(function (c, n) {
    var x = Math.round(X0 + STEP * (start + n)), top = fy(c[1]), bot = fy(c[2]), hi = fy(c[3]), lo = fy(c[4]);
    var kind = c[0], color = kind === 'r' ? '#e8302c' : kind === 'c' ? '#3cd4d4' : '#e8e8e8';
    add(price, 'line', { x1: x, x2: x, y1: hi, y2: kind === 'r' ? top : lo, stroke: color, 'stroke-width': 1.6 });
    if (kind === 'r') add(price, 'line', { x1: x, x2: x, y1: bot, y2: lo, stroke: color, 'stroke-width': 1.6 });
    if (kind === 'w') add(price, 'line', { x1: x - 6, x2: x + 6, y1: top, y2: top, stroke: color, 'stroke-width': 1.6 });
    if (kind === 'r') add(price, 'rect', { x: x - 6, y: top, width: 12, height: bot - top, fill: '#000', stroke: color, 'stroke-width': 1.6 });
    if (kind === 'c') add(price, 'rect', { x: x - 6.5, y: top, width: 13, height: bot - top, fill: '#55ffff' });
  });
}
drawCandles(candlesA, 0, ay);
drawCandles(candlesB, 37, by);
drawCandles(candlesC1, 73, ay);
drawCandles(candlesC2, 76, ay);

polyline(price, [[1158, 191], [1200, 189], [1652, 156]], '#0000e0', 1.6);
polyline(price, section3(
  [835,85,925,140,1000,175,1050,198,1135,230,1220,245,1310,262,1400,295,1480,320,1568,358],
  [670,0,760,35,880,85,1000,130,1120,165,1250,215,1400,262,1568,315],
  [0,845,150,890,280,917,405,940,535,967,700,995,880,1025,1030,1041,1095,1041,1182,1033]), '#a8a8a8', 1.5);
polyline(price, section3(
  [20,318,107,355,147,372,233,407,319,443,362,458,449,490,535,530,621,573,707,622,793,672,880,712,923,730,966,755,1009,782,1095,815,1181,850,1264,880,1350,912,1437,945,1490,970,1568,1000],
  [0,530,84,545,170,557,256,570,343,585,429,600,515,620,602,632,688,647,774,653,1050,655,1115,665,1201,680,1288,690,1374,705,1460,708,1568,718],
  [0,1142,65,1152,130,1152,237,1142,323,1135,405,1120,492,1113,621,1113,730,1110,836,1098,923,1090,1009,1080,1095,1068,1182,1043]), '#00d800', 1.6);
polyline(price, map([20,755,64,755,107,750,147,745,190,752,233,755,276,765,319,772,362,785,405,800,449,820,492,840,535,853,578,860,621,878,664,900,707,925,750,955,793,975,836,1010,880,1040,923,1075,966,1100,1009,1125,1052,1150,1095,1185,1138,1205,1181,1230,1224,1245,1264,1250,1307,1270,1350,1285,1393,1295,1437,1307], ax, ay), '#e000e0', 1.5);
polyline(price, map([84,940,127,920,170,900,213,878,256,865,300,845,343,825,386,808,429,787,472,773,515,757,559,743,602,725,645,700,688,680,731,660,774,612,813,585,856,560,899,533,942,525,985,510,1029,485,1072,478,1115,470,1158,465,1201,475,1244,482,1288,488,1331,497,1374,502,1417,507,1460,515,1503,530,1546,550,1568,562], bx, by).concat(
  map([0,1027,65,1060,108,1078,151,1085,194,1105,237,1122,280,1135,323,1150,362,1155,405,1155,449,1162,492,1162,535,1165,578,1178,621,1182,664,1188,707,1192,750,1190,793,1188,836,1180,880,1160,923,1145,966,1130,1009,1122,1052,1112,1095,1095,1138,1060,1178,1017], cx, ay)), '#e000e0', 1.5);
polyline(price, map([20,825,64,828,107,828,147,812,190,806,233,788,276,788,319,783,362,775,405,795,449,822,492,850,535,875,578,925,621,950,664,1015,707,1060,750,1120,793,1180,836,1220,880,1250,923,1285,966,1310,1009,1330,1052,1350,1095,1338,1138,1342,1181,1328,1224,1312,1264,1285,1307,1278,1350,1275,1393,1275,1437,1280,1495,1310], ax, ay), '#d8d800', 1.5);
polyline(price, map([84,940,127,925,170,895,213,865,256,840,300,798,343,715,386,650,429,605,472,577,515,570,559,555,602,550,645,535,688,515,731,517,774,525,813,522,856,505,899,483,942,480,985,470,1029,430,1072,427,1115,427,1158,422,1201,430,1244,440,1288,475,1331,505,1374,525,1417,548,1460,600,1503,635,1546,680,1568,705], bx, by).concat(
  map([0,1130,65,1190,108,1212,151,1215,194,1225,237,1240,280,1250,323,1250,362,1225,405,1205,449,1170,492,1140,535,1130,578,1140,621,1147,664,1133,707,1125,750,1128,793,1150,836,1157,880,1150,923,1145,966,1130,1009,1100,1052,1070,1095,1055,1138,990,1182,900], cx, ay)), '#d8d800', 1.5);
polyline(price, map([20,855,64,855,107,830,147,785,190,765,233,722,276,720,319,740,362,770,405,820,449,930,492,975,535,1015,578,1065,621,1075,664,1115,707,1145,750,1225,793,1300,836,1360,880,1385,923,1423,966,1405,1009,1365,1052,1330,1095,1290,1138,1262,1181,1257,1224,1248,1264,1241,1307,1270,1350,1285,1393,1295,1437,1305], ax, ay), '#d8d8d8', 1.5);
polyline(price, map([84,940,127,850,170,775,213,710,256,670,300,665,343,590,386,545,429,505,472,483,515,470,559,510,602,550,645,555,688,550,731,555,774,525,813,500,856,460,899,420,942,403,985,403,1029,358,1072,395,1115,430,1158,437,1201,455,1244,530,1288,555,1331,580,1374,605,1417,630,1460,670,1503,720,1546,770,1568,820], bx, by).concat(
  map([0,1210,65,1292,108,1307,151,1300,194,1270,237,1250,280,1225,323,1185,362,1155,405,1135,449,1095,492,1067,535,1070,578,1115,621,1150,664,1168,707,1180,750,1185,793,1175,836,1150,880,1125,923,1110,966,1070,1009,1030,1052,997,1095,975,1138,870,1182,723], cx, ay)), '#d8d8d8', 1.5);

// level band and annotations
add(price, 'rect', { x: 1525, y: 560, width: 186, height: 2.4, fill: '#8a8a8a' });
var ANNO = { fill: '#a0a0a0', 'font-size': 16 };
function label(svg, x, y, text, attrs) {
  var a = { x: x, y: y }; for (var k in attrs) a[k] = attrs[k];
  add(svg, 'text', a, text);
}
label(price, 1531, 584, '4.44 - 4.45', ANNO);
label(price, 1582, 111, '5.49', ANNO);
label(price, 373, 757, '4.02', ANNO);
add(price, 'path', { d: 'M1620 105 L1650 98 M1642 94 L1650 98 L1642 103', fill: 'none', stroke: '#a0a0a0', 'stroke-width': 1.2 });
add(price, 'path', { d: 'M372 750 H354 M360 746 L354 750 L360 754', fill: 'none', stroke: '#a0a0a0', 'stroke-width': 1.2 });
add(price, 'path', { d: 'M1668 76 L1674 82 L1668 88 L1662 82Z', fill: 'none', stroke: '#777', 'stroke-width': 1.2 });
add(price, 'rect', { x: 1688, y: 75.5, width: 15, height: 13, rx: 2, fill: 'none', stroke: '#777', 'stroke-width': 1.4 });
add(price, 'rect', { x: 1696, y: 77, width: 5, height: 10, fill: '#999' });

// axis
add(price, 'line', { x1: 1711, x2: 1711, y1: 67, y2: 781, stroke: '#a00000', 'stroke-width': 1.6 });
for (var t = 0; t <= 14; t++) {
  var pv = 4 + t / 10, yy = py(pv);
  add(price, 'line', { x1: 1711, x2: 1720, y1: yy, y2: yy, stroke: '#a00000', 'stroke-width': 1.4 });
  label(price, 1744, yy + 6, pv.toFixed(2), { fill: '#d82a2a', 'font-size': 17 });
}
add(price, 'rect', { x: 1712, y: 730, width: 74, height: 22, fill: '#000088', stroke: '#a00000' });
label(price, 1714, 747, '4.01', { fill: '#b8c8e8', 'font-size': 17 });

/* ---------- indicator pane ---------- */
var sub = document.getElementById('sub');
var vy = function (v) { return 1144 - v * 6.65; };

[40, 30, 20, 10, -10].forEach(function (v) {
  polyline(sub, [[0, vy(v)], [1711, vy(v)]], '#a80000', 1.4, DOT);
});
polyline(sub, [[1652, vy(0)], [1711, vy(0)]], '#a80000', 1.4, DOT);

for (var i = 0; i <= 100; i++) {
  var tx = Math.round(X0 + STEP * i);
  add(sub, 'line', { x1: tx, x2: tx, y1: 1140.5, y2: 1144, stroke: '#00c000', 'stroke-width': 1 });
}
polyline(sub, [[353, 1144], [387, 1144]], '#d01010', 1.6, { 'stroke-dasharray': '5 6' });
polyline(sub, [[1241, 1144], [1274, 1144]], '#d01010', 1.6, { 'stroke-dasharray': '5 6' });
polyline(sub, [[5, 1144], [353, 1144], [356, 1040], [359, 960], [362, 900], [365, 860], [368, 830], [370, 811], [372, 830], [375, 860], [378, 900], [381, 960], [384, 1040], [387, 1144], [1241, 1144], [1244, 1040], [1247, 960], [1250, 900], [1253, 860], [1256, 830], [1258, 811], [1260, 830], [1263, 860], [1266, 900], [1269, 960], [1272, 1040], [1275, 1144], [1652, 1144]], '#10d0d0', 1.7);

function subLine(d, e) { return map(d, dx, sy).concat(map(e, ex, sy)); }
polyline(sub, subLine(
  [10,1488,70,1470,140,1440,200,1395,260,1380,350,1378,400,1395,450,1430,500,1465,530,1478,620,1480,700,1455,790,1415,900,1398,1000,1375,1080,1320,1180,1275,1290,1215,1370,1175,1440,1110,1520,1075,1568,1068],
  [60,1085,130,1110,200,1155,280,1205,350,1240,430,1258,500,1268,570,1250,660,1238,720,1222,820,1200,920,1190,1100,1187,1180,1168,1233,1168]), '#00c800', 2, { 'stroke-dasharray': '3 5' });
polyline(sub, subLine(
  [10,1355,50,1310,85,1260,130,1222,150,1217,185,1217,205,1235,235,1285,270,1305,310,1315,345,1345,375,1385,400,1420,435,1460,475,1478,505,1480,530,1460,570,1420,610,1370,650,1335,685,1298,740,1296,785,1278,810,1295,860,1280,900,1195,960,1130,1015,1085,1050,1030,1090,990,1150,990,1180,1005,1200,1008,1280,1003,1330,970,1350,965,1390,975,1420,965,1450,975,1500,1010,1530,1050,1568,1072],
  [50,1090,100,1115,150,1150,200,1185,240,1230,280,1255,315,1262,335,1240,345,1235,380,1222,460,1225,500,1200,530,1170,580,1135,650,1118,690,1122,720,1140,760,1140,960,1130,1000,1100,1090,1055,1130,1035,1165,1027,1195,960,1237,847]), '#c8a0d8', 1.5);
polyline(sub, subLine(
  [15,1360,50,1330,100,1285,150,1245,210,1235,250,1265,290,1290,340,1310,390,1370,440,1420,500,1452,525,1455,570,1440,620,1390,680,1330,740,1315,790,1297,830,1295,880,1265,950,1170,1030,1100,1090,1030,1150,1008,1200,1005,1280,1000,1330,985,1390,975,1430,965,1490,1000,1568,1040],
  [60,1060,130,1100,200,1150,260,1190,315,1222,460,1222,520,1205,590,1165,640,1142,700,1135,760,1140,1000,1118,1090,1075,1160,1050,1200,1015,1233,963]), '#10d0d0', 1.5);

// thick MAC4, coloured by section
var M = '#f000f0', BL = '#1010e8', OR = '#f06010';
polyline(sub, map([12,1392,35,1392,80,1365,160,1325,230,1303,265,1303], dx, sy), M, 4);
polyline(sub, map([265,1305,340,1310,400,1328,460,1355,530,1388,600,1388], dx, sy), BL, 4);
polyline(sub, map([600,1388,660,1378,720,1360,790,1340,850,1330,910,1310,960,1280,1040,1220,1100,1165,1160,1125,1230,1098], dx, sy), M, 4);
polyline(sub, map([1230,1098,1330,1050,1400,1028,1460,1020,1530,1022], dx, sy), OR, 4);
polyline(sub, map([1530,1025,1568,1035], dx, sy).concat(map([60,1040,130,1055,200,1078,280,1105,330,1128,430,1153,470,1158,610,1155], ex, sy)), BL, 4);
polyline(sub, map([610,1153,650,1148,720,1148,940,1144,1015,1138,1060,1128,1130,1118,1165,1105,1200,1088], ex, sy), M, 4);
polyline(sub, map([1200,1088,1237,1068], ex, sy), OR, 4);

// thick MAC3, red while rising
[[12,1355,50,1320,100,1275,150,1235,200,1225],
 [525,1460,570,1420,620,1370,680,1320,740,1305,785,1285],
 [830,1295,880,1265,950,1175,1020,1100,1090,1015,1160,998],
 [1205,1005,1230,1005],
 [1280,1000,1300,995,1340,970]].forEach(function (s) { polyline(sub, map(s, dx, sy), '#ff0000', 5.5); });
[[350,1228,390,1222],
 [465,1228,520,1205,580,1160,640,1135,685,1130],
 [800,1140,830,1137],
 [900,1140,1020,1110,1090,1060,1160,1040,1200,975,1238,900]].forEach(function (s) { polyline(sub, map(s, ex, sy), '#ff0000', 5.5); });

// pointing-hand markers
[[362, 1262], [1248, 1186]].forEach(function (h) {
  add(sub, 'path', { transform: 'translate(' + h[0] + ' ' + h[1] + ')', d: 'M2 1 C3 -1 5 -1 5.5 1 L6 8 L12 9 C15 10 16 13 15 16 L13 20 H6 L1 12 L3 11 L2 1Z', fill: '#f6c27c', stroke: '#c07c30', 'stroke-width': .7 });
});

// axis
add(sub, 'rect', { x: 1711, y: 782, width: 74, height: 498, fill: 'none', stroke: '#a00000', 'stroke-width': 2 });
for (var s = -20; s <= 50; s += 5) {
  var sv = vy(s);
  add(sub, 'line', { x1: 1712, x2: s % 10 === 0 ? 1722 : 1717, y1: sv, y2: sv, stroke: '#a00000', 'stroke-width': 1.4 });
  if (s % 10 === 0 && s >= -10) add(sub, 'text', { x: 1779, y: sv + 6, fill: '#d82a2a', 'font-size': 18, 'text-anchor': 'end' }, s.toFixed(2));
}
```
